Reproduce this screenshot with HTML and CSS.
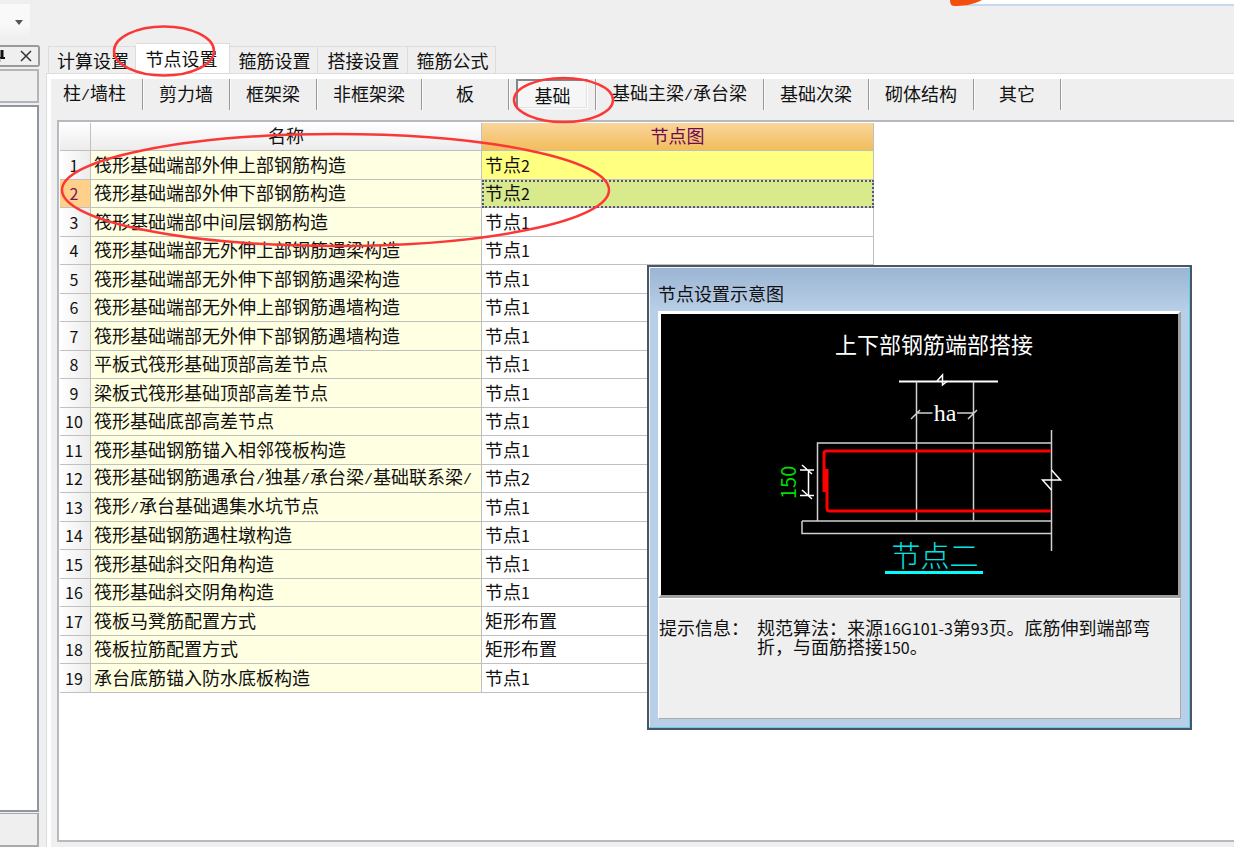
FILE: index.html
```html
<!DOCTYPE html>
<html lang="zh-CN">
<head>
<meta charset="utf-8">
<title>节点设置</title>
<link rel="stylesheet" href="styles.css">
</head>
<body>
<div class="app">
  <header class="topbar">
    <button class="drop" aria-label="更多"><svg width="8" height="5" viewBox="0 0 8 5"><path d="M0 0h8L4 5z" fill="#555"/></svg></button>
    <div class="banner"></div>
    <svg class="flag" width="34" height="7" viewBox="0 0 34 7"><path d="M1 0C1 3 2 6 5 6C14 6 24 5 33 0z" fill="#f2500e"/></svg>
  </header>
  <div class="body">
    <aside class="dock">
      <div class="dock-title">
        <svg width="5" height="12" viewBox="0 0 5 12"><path d="M0 8h5" stroke="#111" stroke-width="2"/><path d="M2 0v8" stroke="#111" stroke-width="3"/><path d="M0 8v4" stroke="#999"/></svg>
        <button class="close" aria-label="关闭"><svg width="12" height="12" viewBox="0 0 12 12"><path d="M1 1l10 10M11 1L1 11" stroke="#333" stroke-width="1.500"/></svg></button>
      </div>
      <div class="dock-bar"></div>
      <div class="dock-list"></div>
      <div class="dock-foot"></div>
    </aside>
    <main class="main">
      <nav class="tabs">
        <button>计算设置</button><button class="on">节点设置</button><button>箍筋设置</button><button class="mid">搭接设置</button><button>箍筋公式</button>
      </nav>
      <section class="page">
        <div class="tools">
          <div class="tool first"><button>柱<span class="h">/</span>墙柱</button></div>
          <div class="tool"><button>剪力墙</button></div>
          <div class="tool"><button>框架梁</button></div>
          <div class="tool wide"><button>非框架梁</button></div>
          <div class="tool"><button>板</button></div>
          <div class="tool"><button class="pressed">基础</button></div>
          <div class="tool widest"><button>基础主梁<span class="h">/</span>承台梁</button></div>
          <div class="tool wide"><button>基础次梁</button></div>
          <div class="tool wide"><button>砌体结构</button></div>
          <div class="tool"><button>其它</button></div>
        </div>
        <div class="grid">
          <table>
            <colgroup><col class="c-num"><col class="c-name"><col class="c-fig"></colgroup>
            <thead><tr><th></th><th>名称</th><th class="cur">节点图</th></tr></thead>
            <tbody>
              <tr><th>1</th><td>筏形基础端部外伸上部钢筋构造</td><td class="yellow">节点<span class="n">2</span></td></tr>
              <tr class="sel"><th>2</th><td>筏形基础端部外伸下部钢筋构造</td><td class="focus">节点<span class="n">2</span></td></tr>
              <tr><th>3</th><td>筏形基础端部中间层钢筋构造</td><td>节点<span class="n">1</span></td></tr>
              <tr><th>4</th><td>筏形基础端部无外伸上部钢筋遇梁构造</td><td>节点<span class="n">1</span></td></tr>
              <tr><th>5</th><td>筏形基础端部无外伸下部钢筋遇梁构造</td><td>节点<span class="n">1</span></td></tr>
              <tr><th>6</th><td>筏形基础端部无外伸上部钢筋遇墙构造</td><td>节点<span class="n">1</span></td></tr>
              <tr><th>7</th><td>筏形基础端部无外伸下部钢筋遇墙构造</td><td>节点<span class="n">1</span></td></tr>
              <tr><th>8</th><td>平板式筏形基础顶部高差节点</td><td>节点<span class="n">1</span></td></tr>
              <tr><th>9</th><td>梁板式筏形基础顶部高差节点</td><td>节点<span class="n">1</span></td></tr>
              <tr><th>10</th><td>筏形基础底部高差节点</td><td>节点<span class="n">1</span></td></tr>
              <tr><th>11</th><td>筏形基础钢筋锚入相邻筏板构造</td><td>节点<span class="n">1</span></td></tr>
              <tr><th>12</th><td>筏形基础钢筋遇承台<span class="h">/</span>独基<span class="h">/</span>承台梁<span class="h">/</span>基础联系梁<span class="h">/</span></td><td>节点<span class="n">2</span></td></tr>
              <tr><th>13</th><td>筏形<span class="h">/</span>承台基础遇集水坑节点</td><td>节点<span class="n">1</span></td></tr>
              <tr><th>14</th><td>筏形基础钢筋遇柱墩构造</td><td>节点<span class="n">1</span></td></tr>
              <tr><th>15</th><td>筏形基础斜交阳角构造</td><td>节点<span class="n">1</span></td></tr>
              <tr><th>16</th><td>筏形基础斜交阴角构造</td><td>节点<span class="n">1</span></td></tr>
              <tr><th>17</th><td>筏板马凳筋配置方式</td><td>矩形布置</td></tr>
              <tr><th>18</th><td>筏板拉筋配置方式</td><td>矩形布置</td></tr>
              <tr><th>19</th><td>承台底筋锚入防水底板构造</td><td>节点<span class="n">1</span></td></tr>
            </tbody>
          </table>
        </div>
      </section>
    </main>
  </div>

  <section class="dialog" role="dialog" aria-labelledby="dlg-title">
    <h2 id="dlg-title">节点设置示意图</h2>
    <div class="client">
      <div class="canvas">
        <svg viewBox="662 314 517 281" fill="none" stroke="#d0d0d0" stroke-width="1.500">
          <text class="cad-head" x="935" y="353" text-anchor="middle">上下部钢筋端部搭接</text>
          <path d="M900 381.500h99" stroke="#fff" stroke-width="2"/>
          <path d="M938 381l5.500-6v10l5-4" stroke="#fff"/>
          <path d="M917.500 381.500v139M974.500 381.500v139M917.500 413h16M958 413h17M912 419l9-9M969 419l9-9"/>
          <text class="cad-dim" x="946" y="421" text-anchor="middle">ha</text>
          <path d="M818.500 521V443H1052M803 521H1052M803 521v12.500H1052M1052.500 430v121"/>
          <path d="M1052.500 470l9 10h-18l9 10" stroke="#fff"/>
          <path d="M1052 451H827q-2 0-2 3v38M828 469v39q0 3 2 3h222" stroke="#f00" stroke-width="3"/>
          <path d="M826.500 469v23" stroke="#f00" stroke-width="5"/>
          <path d="M801 470h14M801 495.500h14M809.500 470v25M803 465l10 9M803 490l10 9" stroke="#fff"/>
          <text class="cad-len" transform="translate(797 499) rotate(-90)">150</text>
          <text class="cad-name" x="936" y="567" text-anchor="middle">节点二</text>
          <path d="M886 572.500h98" stroke="#0ff" stroke-width="3"/>
        </svg>
      </div>
      <div class="info">
        <span>提示信息：</span>
        <p>规范算法：来源<span class="n">16G101-3</span>第<span class="n">93</span>页。底筋伸到端部弯折，与面筋搭接<span class="n">150</span>。</p>
      </div>
    </div>
  </section>

  <svg class="marks" width="640" height="260" viewBox="0 0 640 260" fill="none" stroke="#fb3838" stroke-width="2.500">
    <ellipse cx="164" cy="51" rx="50" ry="24.500"/>
    <ellipse cx="563.500" cy="100" rx="49.500" ry="22"/>
    <ellipse cx="335.500" cy="190" rx="273.500" ry="56"/>
  </svg>
</div>
</body>
</html>
```
FILE: styles.css
```css
* { box-sizing: border-box; }
body {
  margin: 0;
  background: #efefef;
  color: #111;
  font: 18px/20px "Noto Sans CJK SC", sans-serif;
}
button {
  margin: 0;
  padding: 0;
  border: 0;
  background: none;
  color: inherit;
  font: inherit;
  white-space: nowrap;
}
svg { display: block; }
.n { font-size: 16px; line-height: 1; }
.h { font-family: "Liberation Mono", monospace; font-size: 15px; line-height: 1; }

.app {
  position: relative;
  display: flex;
  flex-direction: column;
  min-height: 100vh;
  overflow: hidden;
}
.topbar { position: relative; height: 43px; flex: none; }
.drop {
  display: flex;
  justify-content: flex-end;
  align-items: center;
  width: 30px;
  height: 34px;
  margin-top: 4px;
  padding: 2px 7px 0 0;
  background: linear-gradient(#f9f9f9, #f9f9f9 60%, #efefef);
}
.banner {
  position: absolute;
  top: 0;
  left: 965px;
  right: 0;
  height: 6px;
  background: #fff;
  border-bottom: 2px solid #c8d8ee;
}
.flag { position: absolute; top: 0; left: 949px; }
.body { flex: 1; display: flex; }

.dock {
  flex: none;
  width: 46px;
  padding: 2px 6px 0 0;
  display: flex;
  flex-direction: column;
}
.dock-title {
  display: flex;
  justify-content: space-between;
  align-items: center;
  height: 22px;
  padding-right: 6px;
  border: 2px solid #9a9a9a;
  border-left: 0;
  border-radius: 0 3px 3px 0;
}
.dock-bar {
  height: 34px;
  margin: 2px 1px 2px 0;
  border: 2px solid #b5b5b5;
  border-left: 0;
}
.dock-list {
  flex: 1;
  margin-right: 1px;
  background: #fff;
  border: 2px solid #8f969f;
  border-left: 0;
}
.dock-foot {
  height: 34px;
  margin: 1px 1px 0 0;
  border: 1px solid #aaa;
  border-width: 1px 2px 2px 0;
}

.main { flex: 1; min-width: 0; display: flex; flex-direction: column; }
.tabs { display: flex; align-items: flex-end; height: 30px; padding-left: 2px; }
.tabs button {
  width: 88px;
  height: 27px;
  padding: 0 0 1px 2px;
  border: 1px solid #dcdcdc;
  border-width: 1px 1px 0 0;
}
.tabs button:first-child { border-left-width: 1px; }
.tabs .on {
  width: 94px;
  height: 30px;
  background: #fff;
  padding: 0 2px 2px 0;
}
.tabs .mid { width: 90px; }
.page {
  flex: 1;
  display: flex;
  flex-direction: column;
  padding: 5px 0 5px 4px;
  border-top: 1px solid #dcdcdc;
  border-left: 1px solid #dcdcdc;
  background: linear-gradient(#fff, #fff) 0 0 / 100% 5px no-repeat, linear-gradient(#fff, #fff) 0 0 / 4px 100% no-repeat;
}
.tools { display: flex; padding-bottom: 10px; }
.tool {
  flex: none;
  width: 87px;
  height: 31px;
  display: flex;
  justify-content: center;
  border-right: 1px solid #999;
  box-shadow: 1px 0 #fafafa;
}
.tool button { width: 100%; padding-bottom: 3px; }
.first { width: 92px; padding-right: 4px; }
.wide { width: 105px; }
.widest { width: 168px; }
.tool .pressed {
  width: 72px;
  height: 30px;
  padding: 1px 0 0;
  background: #f6f6f6;
  border: 1px solid #fff;
  border-top: 2px solid #858585;
  border-left: 2px solid #858585;
  box-shadow: inset -1px -1px #e2e2e2;
}
.grid {
  flex: 1;
  margin-left: 6px;
  padding: 1px;
  background: #fff;
  border: 2px solid #b6b9c0;
  border-right: 0;
}
table {
  width: 814px;
  border-spacing: 0;
  table-layout: fixed;
}
.c-num { width: 31px; }
.c-name { width: 391px; }
.c-fig { width: 392px; }
th, td {
  height: 28px;
  padding: 0 0 3px 3px;
  border: 0 solid #c0c0c0;
  border-width: 0 1px 1px 0;
  text-align: left;
  font-weight: 400;
  white-space: nowrap;
}
tbody tr:nth-child(odd) > * { height: 29px; }
th {
  padding: 0 0 3px;
  text-align: center;
  background: linear-gradient(#fff, #ececec);
}
tbody th { padding: 0 2px 1px 0; font-size: 16px; background: linear-gradient(90deg, #fff, #ececec); }
td:nth-child(2) { background: #ffffe1; }
th.cur { color: #6b0b50; background: linear-gradient(#f9d59c, #f2bd5c); }
.sel th { color: #7a1560; background: #ffd08a; }
td.yellow { background: #ffff80; }
td.focus {
  background: #d8ea8c;
  outline: 2px dotted #555580;
  outline-offset: -2px;
}

.dialog {
  position: absolute;
  top: 265px;
  left: 647px;
  width: 545px;
  padding: 1px 9px 9px;
  border: 2px solid #4c5660;
  background: linear-gradient(#9ab4d2, #b9cfe8 44px);
  box-shadow: inset -1px -1px #5fd0ea, inset 1px 1px #eef4fa;
}
.dialog h2 {
  margin: 0;
  padding: 15px 0 8px;
  font-size: 18px;
  font-weight: 400;
  line-height: 20px;
}
.canvas {
  background: #000;
  border: 3px solid #a0a0a0;
  border-top-color: #fff;
  border-left-color: #fff;
}
.canvas svg { width: 100%; height: auto; }
.cad-head, .cad-dim, .cad-len, .cad-name { stroke: none; fill: #fff; }
.cad-head { font-size: 22px; }
.cad-dim { font: 24px "Liberation Serif", serif; }
.cad-len { font-size: 20px; fill: #0d0; }
.cad-name { font-size: 29px; font-weight: 300; fill: #00e5e5; }
.info {
  display: flex;
  gap: 8px;
  min-height: 121px;
  padding: 19px 20px 20px 0;
  line-height: 19px;
  background: #efefef;
  border: 1px solid #aaa;
  border-top-color: #fff;
  border-left-color: #fff;
}
.info > span { flex: none; }
.info p { margin: 0; }
.marks { position: absolute; top: 0; left: 0; pointer-events: none; }
```
